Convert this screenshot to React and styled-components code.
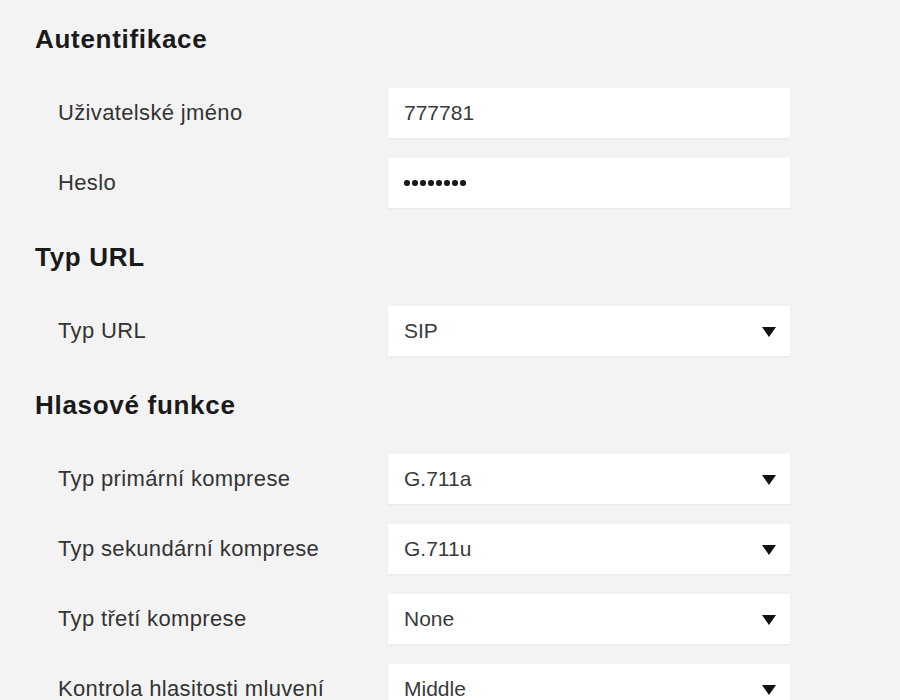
import React from 'react';
import styled, { createGlobalStyle } from 'styled-components';

const GlobalStyle = createGlobalStyle`
    html, body {
        margin: 0;
        padding: 0;
        background: #f3f3f3;
    }
    body {
        font-family: "Liberation Sans", Arial, sans-serif;
    }
`;

const Page = styled.div`
    width: 900px;
    height: 700px;
    overflow: hidden;
    box-sizing: border-box;
    padding: 24px 0 0 35px;
    background: #f3f3f3;
    display: flex;
    flex-direction: column;
    gap: 34px;
`;

// Skupina nastavení s nadpisem
const Section = styled.section`
    display: flex;
    flex-direction: column;
`;

const SectionTitle = styled.h2`
    margin: 0 0 34px;
    font-family: "Liberation Sans", Arial, sans-serif;
    font-size: 26px;
    line-height: 30px;
    font-weight: bold;
    letter-spacing: 0.7px;
    color: #1a1a1a;
`;

const Rows = styled.div`
    display: flex;
    flex-direction: column;
    gap: 20px;
`;

const Row = styled.div`
    display: grid;
    grid-template-columns: 330px 402px;
    align-items: center;
    padding-left: 23px;
`;

const Label = styled.span`
    font-family: "Liberation Sans", Arial, sans-serif;
    font-size: 22px;
    letter-spacing: 0.35px;
    color: #333;
`;

const Field = styled.div`
    height: 50px;
    box-sizing: border-box;
    padding: 0 14px 0 16px;
    background: #fff;
    box-shadow: 0 1px 2px rgba(0, 0, 0, 0.05);
    display: flex;
    align-items: center;
    justify-content: space-between;
    font-family: "Liberation Sans", Arial, sans-serif;
    font-size: 21px;
    color: #3a3a3a;
`;

const Dots = styled.span`
    display: flex;
    gap: 2.5px;
`;

const Dot = styled.i`
    width: 5.5px;
    height: 5.5px;
    border-radius: 50%;
    background: #1a1a1a;
`;

const Caret = styled.svg`
    width: 14px;
    height: 10px;
    margin-top: 2px;
`;

const Arrow = () => (
    <Caret viewBox="0 0 14 10">
        <path d="M0 0 L14 0 L7 10 Z" fill="#111" />
    </Caret>
);

const sections = [
    {
        title: 'Autentifikace',
        rows: [
            { label: 'Uživatelské jméno', value: '777781' },
            { label: 'Heslo', secret: 8 },
        ],
    },
    {
        title: 'Typ URL',
        rows: [{ label: 'Typ URL', value: 'SIP', select: true }],
    },
    {
        title: 'Hlasové funkce',
        rows: [
            { label: 'Typ primární komprese', value: 'G.711a', select: true },
            { label: 'Typ sekundární komprese', value: 'G.711u', select: true },
            { label: 'Typ třetí komprese', value: 'None', select: true },
            { label: 'Kontrola hlasitosti mluvení', value: 'Middle', select: true },
        ],
    },
];

const App = () => (
    <>
        <GlobalStyle />
        <Page>
            {sections.map((s) => (
                <Section key={s.title}>
                    <SectionTitle>{s.title}</SectionTitle>
                    <Rows>
                        {s.rows.map((r) => (
                            <Row key={r.label}>
                                <Label>{r.label}</Label>
                                <Field>
                                    {r.secret ? (
                                        <Dots>
                                            {Array.from({ length: r.secret }).map((_, i) => (
                                                <Dot key={i} />
                                            ))}
                                        </Dots>
                                    ) : (
                                        <span>{r.value}</span>
                                    )}
                                    {r.select && <Arrow />}
                                </Field>
                            </Row>
                        ))}
                    </Rows>
                </Section>
            ))}
        </Page>
    </>
);

export default App;
